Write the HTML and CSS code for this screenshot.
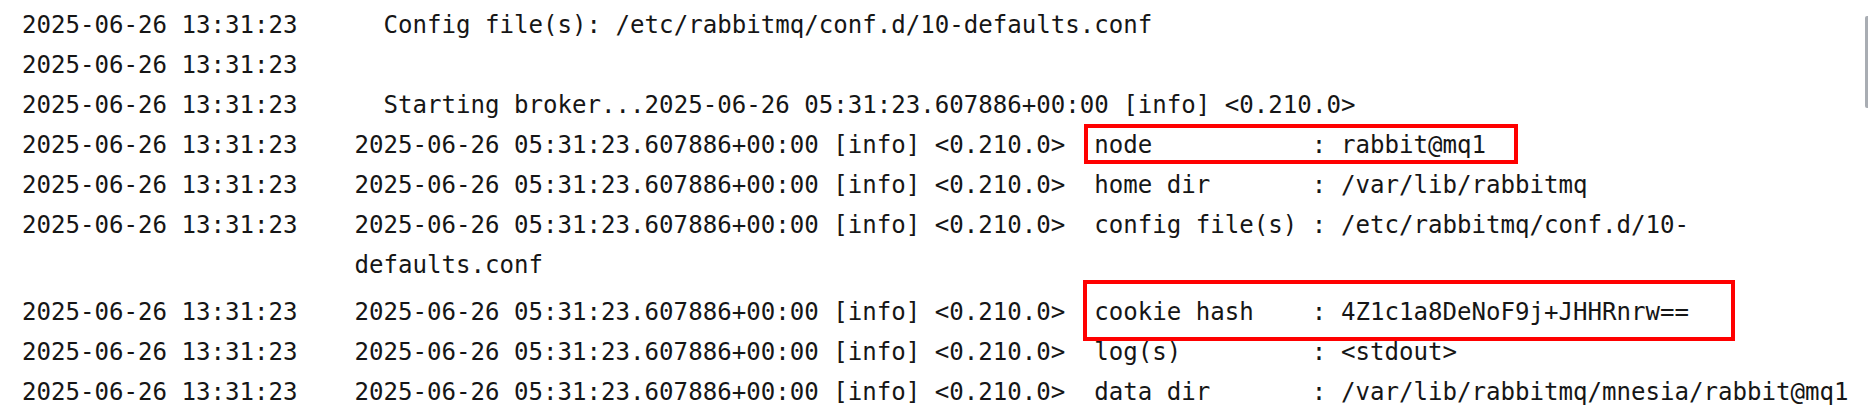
FILE: index.html
```html
<!DOCTYPE html>
<html lang="en">
<head>
<meta charset="utf-8">
<title>rabbitmq logs</title>
<link rel="stylesheet" href="styles.css">
</head>
<body>
<div class="log">
  <div class="row"><span class="ts">2025-06-26 13:31:23</span><span class="msg">  Config file(s): /etc/rabbitmq/conf.d/10-defaults.conf</span></div>
  <div class="row"><span class="ts">2025-06-26 13:31:23</span><span class="msg"></span></div>
  <div class="row"><span class="ts">2025-06-26 13:31:23</span><span class="msg">  Starting broker...2025-06-26 05:31:23.607886+00:00 [info] &lt;0.210.0&gt;</span></div>
  <div class="row"><span class="ts">2025-06-26 13:31:23</span><span class="msg">2025-06-26 05:31:23.607886+00:00 [info] &lt;0.210.0&gt;  node           : rabbit@mq1</span></div>
  <div class="row"><span class="ts">2025-06-26 13:31:23</span><span class="msg">2025-06-26 05:31:23.607886+00:00 [info] &lt;0.210.0&gt;  home dir       : /var/lib/rabbitmq</span></div>
  <div class="row row-wrap"><span class="ts">2025-06-26 13:31:23</span><span class="msg">2025-06-26 05:31:23.607886+00:00 [info] &lt;0.210.0&gt;  config file(s) : /etc/rabbitmq/conf.d/10-<wbr>defaults.conf</span></div>
  <div class="row"><span class="ts">2025-06-26 13:31:23</span><span class="msg">2025-06-26 05:31:23.607886+00:00 [info] &lt;0.210.0&gt;  cookie hash    : 4Z1c1a8DeNoF9j+JHHRnrw==</span></div>
  <div class="row"><span class="ts">2025-06-26 13:31:23</span><span class="msg">2025-06-26 05:31:23.607886+00:00 [info] &lt;0.210.0&gt;  log(s)         : &lt;stdout&gt;</span></div>
  <div class="row"><span class="ts">2025-06-26 13:31:23</span><span class="msg">2025-06-26 05:31:23.607886+00:00 [info] &lt;0.210.0&gt;  data dir       : /var/lib/rabbitmq/mnesia/rabbit@mq1</span></div>
  <div class="row"><span class="ts">2025-06-26 13:31:23</span><span class="msg">2025-06-26 05:31:23.607886+00:00 [info] &lt;0.210.0&gt; Running boot step pre_boot defined by app rabbit</span></div>

  <div class="mark mark-node"></div>
  <div class="mark mark-cookie"></div>
  <div class="thumb"></div>
</div>
</body>
</html>
```
FILE: styles.css
```css
html, body {
  margin: 0;
  padding: 0;
  background: #ffffff;
  overflow: hidden;
  height: 414px;
}

.log {
  position: relative;
  box-sizing: border-box;
  width: 1868px;
  height: 414px;
  padding: 5px 0 0 22px;
  font-family: "DejaVu Sans Mono", "Liberation Mono", monospace;
  font-size: 24.1px;
  line-height: 40px;
  color: #161616;
}

.row {
  display: grid;
  grid-template-columns: 332.5px 1fr;
}

.row-wrap {
  margin-bottom: 7px;
}

.ts {
  white-space: pre;
}

.msg {
  white-space: pre-wrap;
  min-height: 40px;
}

.mark {
  position: absolute;
  box-sizing: border-box;
  border: 4px solid #ff0000;
}

.mark-node {
  left: 1084px;
  top: 124px;
  width: 434px;
  height: 40px;
}

.mark-cookie {
  left: 1083px;
  top: 280px;
  width: 652px;
  height: 61px;
}

.thumb {
  position: absolute;
  right: 0;
  top: 16px;
  width: 3px;
  height: 92px;
  background: #a9adb3;
  border-radius: 2px 0 0 2px;
}
```
